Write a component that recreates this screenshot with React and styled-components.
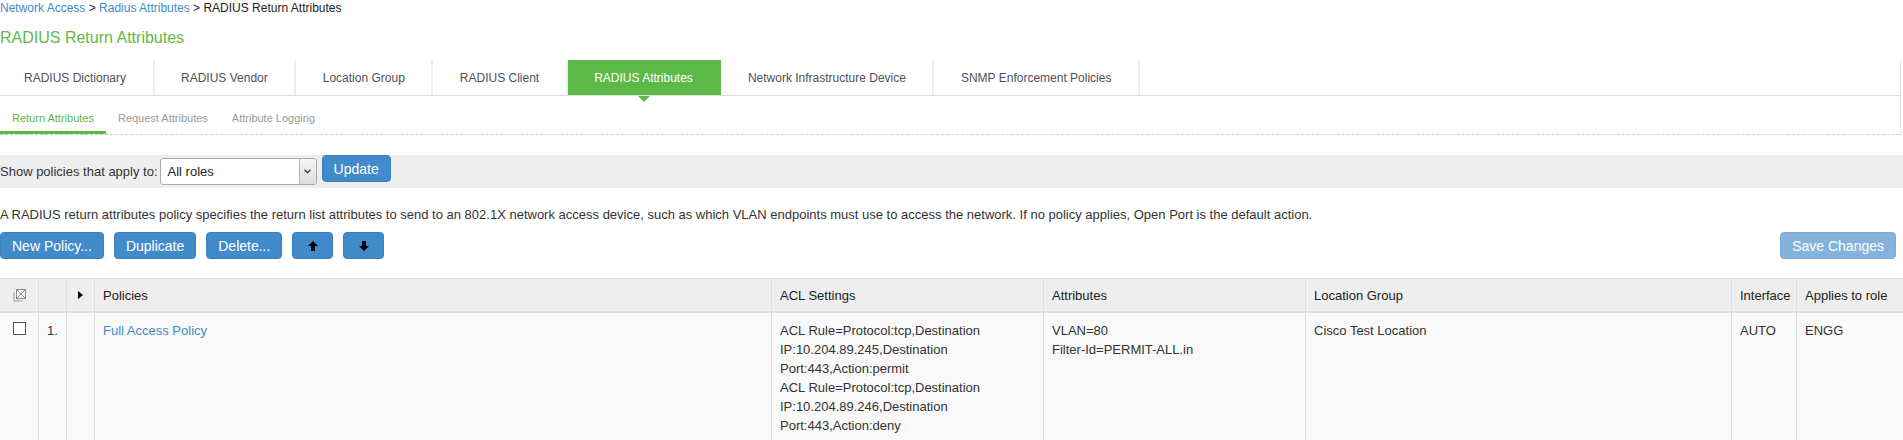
import React from "react";
import styled, { createGlobalStyle, css } from "styled-components";

const GlobalStyle = createGlobalStyle`
  html, body { margin: 0; padding: 0; overflow: hidden; background: #fff; }
  body { font-family: "Liberation Sans", Arial, sans-serif; color: #333; }
  * { box-sizing: border-box; }
`;

const BLUE = "#428bca";
const GREEN = "#5cb947";

const Page = styled.div`
  width: 100%;
`;

const Breadcrumb = styled.div`
  font-size: 12px;
  line-height: 16px;
  color: #222;
`;

const Crumb = styled.a`
  color: ${BLUE};
  text-decoration: none;
`;

const Title = styled.h1`
  margin: 12px 0 0;
  font-size: 16px;
  font-weight: normal;
  line-height: 20px;
  color: #62b946;
`;

const NavWrap = styled.div`
  margin-top: 12px;
  margin-right: 2px;
  border-right: 1px solid #e6e6e6;
`;

const TabList = styled.div`
  display: flex;
  border-bottom: 1px solid #ddd;
`;

const Tab = styled.div`
  position: relative;
  height: 35px;
  padding: 0 26.5px;
  display: flex;
  align-items: center;
  font-size: 12px;
  color: #50505a;
  border-right: 2px solid #eee;
  white-space: nowrap;
  &:first-child {
    padding-left: 24px;
  }
  ${(p) =>
    p.$active &&
    css`
      background: ${GREEN};
      color: #fff;
      border-right-color: ${GREEN};
      &::after {
        content: "";
        position: absolute;
        left: 50%;
        bottom: -7px;
        margin-left: -6px;
        border-left: 6px solid transparent;
        border-right: 6px solid transparent;
        border-top: 6px solid ${GREEN};
      }
    `}
`;

const SubTabs = styled.div`
  display: flex;
  border-bottom: 1px dashed #ccc;
`;

const SubTab = styled.div`
  padding: 16px 12px 6px;
  font-size: 11px;
  line-height: 13px;
  color: ${(p) => (p.$active ? GREEN : "#999")};
  border-bottom: 3px solid ${(p) => (p.$active ? GREEN : "transparent")};
`;

const FilterBar = styled.div`
  margin-top: 20px;
  height: 33px;
  background: #eee;
  display: flex;
  align-items: center;
  font-size: 13px;
`;

const FilterLabel = styled.span`
  margin-right: 2px;
`;

const SelectBox = styled.div`
  width: 157px;
  height: 27px;
  margin-right: 5px;
  display: flex;
  background: #fff;
  border: 1px solid #a9a9a9;
  border-radius: 3px;
  overflow: hidden;
`;

const SelectText = styled.div`
  flex: 1;
  padding-left: 7px;
  display: flex;
  align-items: center;
  font-size: 13px;
  color: #222;
`;

const SelectArrow = styled.div`
  width: 17px;
  border-left: 1px solid #b5b5b5;
  background: linear-gradient(#f4f4f4, #dedede);
  display: flex;
  align-items: center;
  justify-content: center;
`;

const Button = styled.button`
  height: 27px;
  padding: 0 ${(p) => (p.$icon ? "0" : "11px")};
  width: ${(p) => (p.$icon ? "41px" : "auto")};
  font-family: "Liberation Sans", Arial, sans-serif;
  font-size: 14px;
  color: #fff;
  background: ${BLUE};
  border: 1px solid #3a80bf;
  border-radius: 4px;
  display: inline-flex;
  align-items: center;
  justify-content: center;
  cursor: pointer;
  opacity: ${(p) => (p.disabled ? 0.65 : 1)};
  margin-bottom: ${(p) => (p.$raised ? "6px" : "0")};
`;

const Description = styled.p`
  margin: 17px 0 0;
  font-size: 13px;
  line-height: 19px;
`;

const Toolbar = styled.div`
  margin-top: 8px;
  display: flex;
  justify-content: space-between;
  padding-right: 7px;
`;

const ButtonGroup = styled.div`
  display: flex;
  gap: 10px;
`;

const Table = styled.table`
  margin-top: 19px;
  width: 100%;
  table-layout: fixed;
  border-collapse: separate;
  border-spacing: 0;
  font-size: 13px;
`;

const Col = styled.col`
  width: ${(p) => p.$w}px;
`;

const Th = styled.th`
  height: 35px;
  padding: 0 8px;
  text-align: ${(p) => (p.$center ? "center" : "left")};
  font-weight: normal;
  vertical-align: middle;
  background: #eee;
  color: #222;
  border-top: 1px solid #ddd;
  border-bottom: 2px solid #ddd;
  border-right: ${(p) => (p.$last ? "none" : "1px solid #ddd")};
`;

const Td = styled.td`
  padding: 8px;
  vertical-align: top;
  line-height: 19px;
  background: #f9f9f9;
  text-align: ${(p) => (p.$center ? "center" : "left")};
  border-right: ${(p) => (p.$last ? "none" : "1px solid #ddd")};
`;

const Check = styled.span`
  display: block;
  width: 13px;
  height: 13px;
  margin: 1px auto 0;
  border: 1px solid #555;
  background: #fff;
`;

const PolicyLink = styled.a`
  color: ${BLUE};
  text-decoration: none;
`;

const Line = styled.div``;

const ArrowIcon = ({ down }) => (
  <svg width="10" height="10" viewBox="0 0 10 10" style={{ transform: down ? "rotate(180deg)" : "none" }}>
    <path d="M5 0 L10 5 L7 5 L7 10 L3 10 L3 5 L0 5 Z" fill="#000" />
  </svg>
);

const SelectAllIcon = () => (
  <svg width="13" height="13" viewBox="0 0 13 13" style={{ display: "block", margin: "0 auto" }}>
    <path d="M1 3.5 V12 H9.5" fill="none" stroke="#999" strokeWidth="1" />
    <rect x="3.5" y="0.5" width="9" height="9" fill="#fff" stroke="#888" strokeWidth="1" />
    <path d="M4 1 L12 9 M12 1 L4 9" stroke="#888" strokeWidth="1" />
  </svg>
);

const TriangleIcon = () => (
  <svg width="5" height="8" viewBox="0 0 5 8" style={{ display: "block", margin: "0 auto" }}>
    <path d="M0 0 L5 4 L0 8 Z" fill="#000" />
  </svg>
);

const Chevron = () => (
  <svg width="7" height="5" viewBox="0 0 7 5">
    <path d="M0.5 0.8 L3.5 3.8 L6.5 0.8" fill="none" stroke="#444" strokeWidth="1.4" />
  </svg>
);

const tabs = [
  "RADIUS Dictionary",
  "RADIUS Vendor",
  "Location Group",
  "RADIUS Client",
  "RADIUS Attributes",
  "Network Infrastructure Device",
  "SNMP Enforcement Policies",
];

const subTabs = ["Return Attributes", "Request Attributes", "Attribute Logging"];

const cols = [39, 28, 28, 677, 272, 262, 426, 65, 106];

const aclLines = [
  "ACL Rule=Protocol:tcp,Destination IP:10.204.89.245,Destination Port:443,Action:permit",
  "ACL Rule=Protocol:tcp,Destination IP:10.204.89.246,Destination Port:443,Action:deny",
];

export default function App() {
  return (
    <Page>
      <GlobalStyle />
      <Breadcrumb>
        <Crumb href="#">Network Access</Crumb> &gt; <Crumb href="#">Radius Attributes</Crumb> &gt; RADIUS Return Attributes
      </Breadcrumb>
      <Title>RADIUS Return Attributes</Title>
      <NavWrap>
        <TabList>
          {tabs.map((t) => (
            <Tab key={t} $active={t === "RADIUS Attributes"}>
              {t}
            </Tab>
          ))}
        </TabList>
        <SubTabs>
          {subTabs.map((t, i) => (
            <SubTab key={t} $active={i === 0}>
              {t}
            </SubTab>
          ))}
        </SubTabs>
      </NavWrap>

      <FilterBar>
        <FilterLabel>Show policies that apply to:</FilterLabel>
        <SelectBox>
          <SelectText>All roles</SelectText>
          <SelectArrow>
            <Chevron />
          </SelectArrow>
        </SelectBox>
        <Button $raised>Update</Button>
      </FilterBar>

      <Description>
        A RADIUS return attributes policy specifies the return list attributes to send to an 802.1X network access
        device, such as which VLAN endpoints must use to access the network. If no policy applies, Open Port is the
        default action.
      </Description>

      <Toolbar>
        <ButtonGroup>
          <Button>New Policy...</Button>
          <Button>Duplicate</Button>
          <Button>Delete...</Button>
          <Button $icon>
            <ArrowIcon />
          </Button>
          <Button $icon>
            <ArrowIcon down />
          </Button>
        </ButtonGroup>
        <Button disabled>Save Changes</Button>
      </Toolbar>

      <Table>
        <colgroup>
          {cols.map((w, i) => (
            <Col key={i} $w={w} />
          ))}
        </colgroup>
        <thead>
          <tr>
            <Th $center>
              <SelectAllIcon />
            </Th>
            <Th />
            <Th $center>
              <TriangleIcon />
            </Th>
            <Th>Policies</Th>
            <Th>ACL Settings</Th>
            <Th>Attributes</Th>
            <Th>Location Group</Th>
            <Th>Interface</Th>
            <Th $last>Applies to role</Th>
          </tr>
        </thead>
        <tbody>
          <tr>
            <Td $center>
              <Check />
            </Td>
            <Td>1.</Td>
            <Td />
            <Td>
              <PolicyLink href="#">Full Access Policy</PolicyLink>
            </Td>
            <Td>
              {aclLines.map((l, i) => (
                <Line key={i}>{l}</Line>
              ))}
            </Td>
            <Td>
              <Line>VLAN=80</Line>
              <Line>Filter-Id=PERMIT-ALL.in</Line>
            </Td>
            <Td>Cisco Test Location</Td>
            <Td>AUTO</Td>
            <Td $last>ENGG</Td>
          </tr>
        </tbody>
      </Table>
    </Page>
  );
}
